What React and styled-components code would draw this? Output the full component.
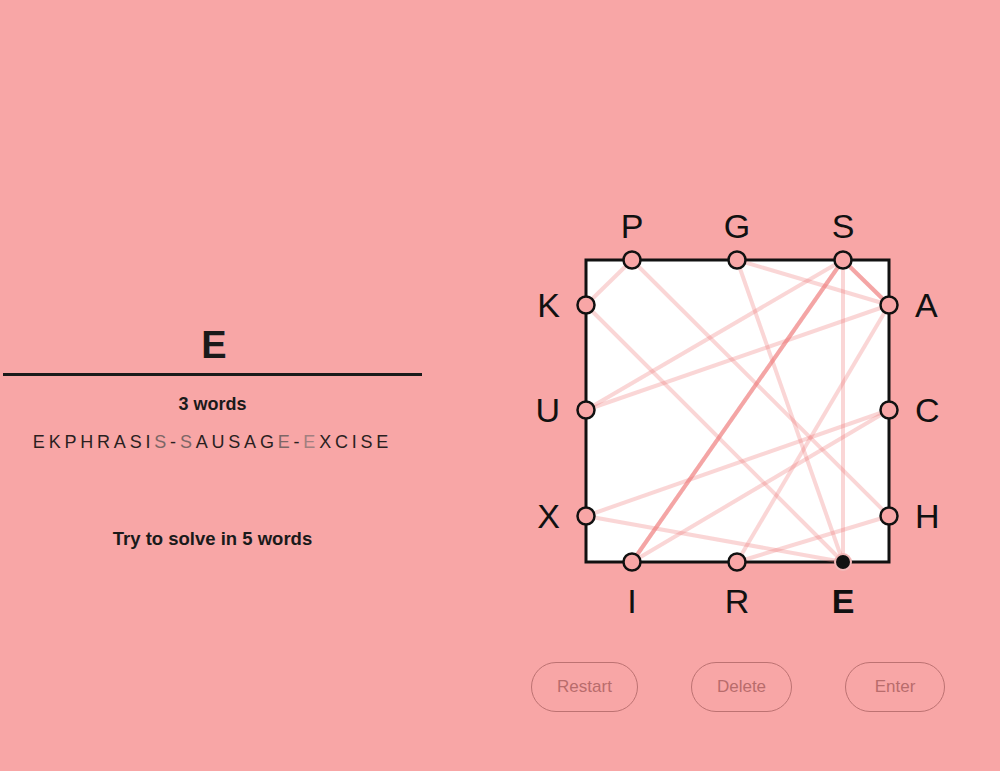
import styled, { createGlobalStyle } from "styled-components";

const GlobalStyle = createGlobalStyle`
  html, body {
    margin: 0;
    padding: 0;
    background: #f8a6a6;
  }
  body {
    font-family: "Liberation Sans", Arial, sans-serif;
    color: #1a1a1a;
  }
`;

const letters = {
  P: [632, 260], G: [737, 260], S: [843, 260],
  K: [586, 305], U: [586, 410], X: [586, 516],
  A: [889, 305], C: [889, 410], H: [889, 516],
  I: [632, 562], R: [737, 562], E: [843, 562],
};

const words = ["EKPHRASIS", "SAUSAGE", "EXCISE"];

// board svg origin
const OX = 520;
const OY = 200;

const labelPos = (ch) => {
  const [x, y] = letters[ch];
  if (y === 260) return [x, y - 22, "middle"];
  if (y === 562) return [x, y + 51, "middle"];
  if (x === 586) return [x - 26, y + 12, "end"];
  return [x + 26, y + 12, "start"];
};

const segments = [];
words.forEach((w) => {
  for (let i = 0; i < w.length - 1; i++) segments.push([w[i], w[i + 1]]);
});

const Page = styled.div`
  display: flex;
  width: 1000px;
  height: 771px;
  overflow: hidden;
`;

const Left = styled.div`
  width: 425px;
  padding-top: 322px;
  display: flex;
  flex-direction: column;
  align-items: center;
`;

const Current = styled.div`
  font-size: 38px;
  font-weight: 700;
  line-height: 46px;
  padding-left: 3px;
`;

const Rule = styled.div`
  align-self: stretch;
  margin: 5px 3px 0 3px;
  height: 3px;
  background: #1a1a1a;
`;

const Count = styled.div`
  margin-top: 18px;
  font-size: 18px;
  font-weight: 700;
`;

const Solution = styled.div`
  margin-top: 17px;
  font-size: 18px;
  letter-spacing: 3.8px;
  color: #2a1f1f;
`;

const Faded = styled.span`
  color: ${(p) => (p.$light ? "#a27f7f" : "#7d6666")};
`;

const Goal = styled.div`
  margin-top: 75px;
  font-size: 18.5px;
  font-weight: 700;
`;

const Right = styled.div`
  flex: 1;
  display: flex;
  flex-direction: column;
  padding-top: 200px;
  padding-left: 95px;
`;

const Board = styled.svg`
  display: block;
  width: 440px;
  height: 430px;
  font-family: "Liberation Sans", Arial, sans-serif;
`;

const Buttons = styled.div`
  display: flex;
  gap: 53px;
  margin-top: 32px;
  margin-left: 11px;
`;

const Button = styled.button`
  width: ${(p) => p.$w}px;
  height: 50px;
  border-radius: 25px;
  border: 1px solid #bd7272;
  background: transparent;
  color: #b86c6c;
  font-family: "Liberation Sans", Arial, sans-serif;
  font-size: 17px;
`;

export default function App() {
  return (
    <Page>
      <GlobalStyle />
      <Left>
        <Current>E</Current>
        <Rule />
        <Count>3 words</Count>
        <Solution>
          EKPHRASI<Faded>S</Faded>-<Faded>S</Faded>AUSAG<Faded>E</Faded>-
          <Faded $light>E</Faded>XCISE
        </Solution>
        <Goal>Try to solve in 5 words</Goal>
      </Left>
      <Right>
        <Board viewBox={`${OX} ${OY} 440 430`}>
          <rect x="586" y="260" width="303" height="302" fill="#fff" stroke="#111" strokeWidth="3" />
          {segments.map(([a, b], i) => (
            <line
              key={i}
              x1={letters[a][0]}
              y1={letters[a][1]}
              x2={letters[b][0]}
              y2={letters[b][1]}
              stroke="rgb(238,118,118)"
              strokeOpacity="0.3"
              strokeWidth="4"
            />
          ))}
          {Object.entries(letters).map(([ch, [x, y]]) => {
            const [lx, ly, anchor] = labelPos(ch);
            const active = ch === "E";
            return (
              <g key={ch}>
                {active ? (
                  <>
                    <circle cx={x} cy={y} r="9" fill="#f3b8b8" />
                    <circle cx={x} cy={y} r="7" fill="#111" />
                  </>
                ) : (
                  <circle cx={x} cy={y} r="8.5" fill="#f8a6a6" stroke="#111" strokeWidth="2.5" />
                )}
                <text
                  x={lx}
                  y={ly}
                  textAnchor={anchor}
                  fontSize="34"
                  fontWeight={active ? 700 : 400}
                  fill="#111"
                >
                  {ch}
                </text>
              </g>
            );
          })}
        </Board>
        <Buttons>
          <Button $w={107}>Restart</Button>
          <Button $w={101}>Delete</Button>
          <Button $w={100}>Enter</Button>
        </Buttons>
      </Right>
    </Page>
  );
}
